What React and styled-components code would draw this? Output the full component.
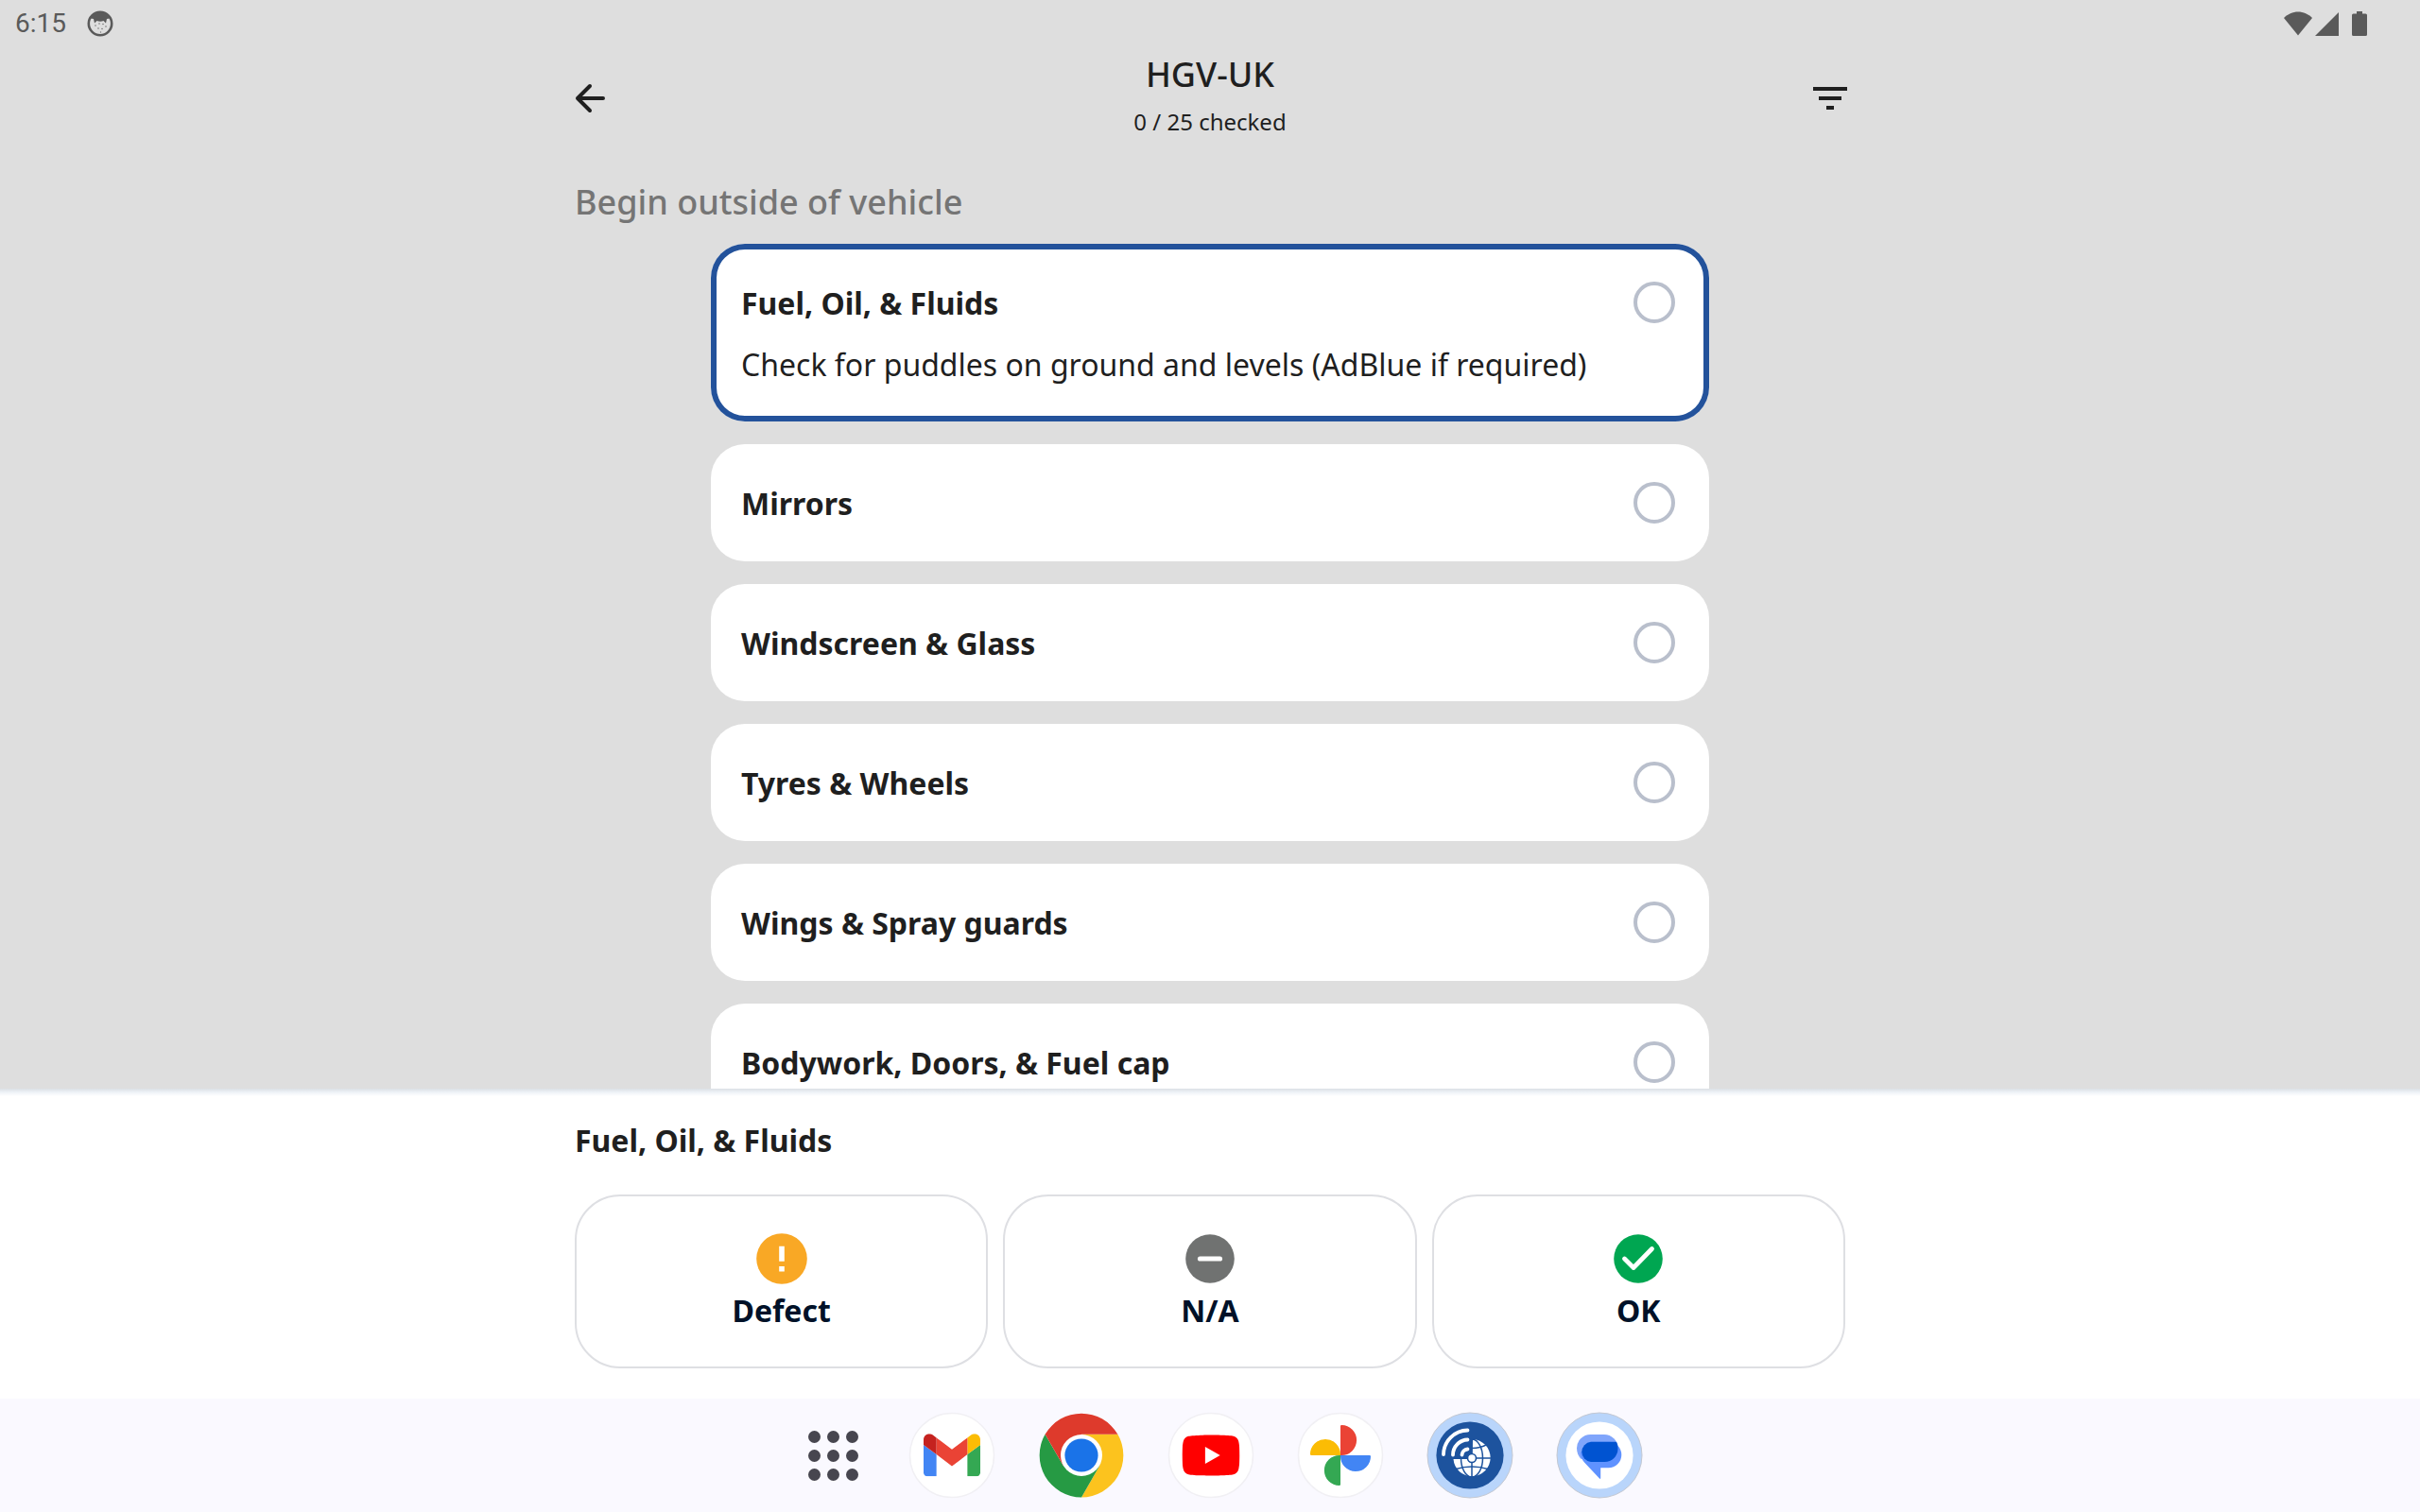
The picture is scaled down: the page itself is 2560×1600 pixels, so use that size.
import React, { useState } from "react";
import styled, { createGlobalStyle } from "styled-components";

const GlobalStyle = createGlobalStyle`
  * { box-sizing: border-box; }
  html, body { margin: 0; padding: 0; }
  body {
    background: #dedede;
    color: #1f1f1f;
    font-family: "Noto Sans", "Open Sans", sans-serif;
  }
  button, input { font: inherit; }
`;

const Screen = styled.div`
  display: flex;
  flex-direction: column;
  height: 100vh;
  overflow: hidden;
`;

const StatusBar = styled.div`
  flex: none;
  display: flex;
  align-items: center;
  justify-content: space-between;
  height: 48px;
  padding: 2px 56px 0 16px;
  color: #5a5a5a;
`;

const StatusGroup = styled.div`
  display: flex;
  align-items: center;
  gap: ${(p) => p.$gap}px;
`;

const Clock = styled.time`
  font-family: Roboto, sans-serif;
  font-size: 28px;
  line-height: 46px;
`;

const Header = styled.header`
  flex: none;
  display: flex;
  align-items: center;
  justify-content: space-between;
  width: 100%;
  max-width: 1360px;
  height: 112px;
  margin: 0 auto;
`;

const IconButton = styled.button`
  display: flex;
  align-items: center;
  justify-content: center;
  width: 48px;
  height: 48px;
  padding: 0;
  border: 0;
  background: none;
  color: #1f1f1f;
`;

const Heading = styled.div`
  display: flex;
  flex-direction: column;
  align-items: center;
  gap: 8px;
  padding-bottom: 6px;
`;

const Title = styled.h1`
  margin: 0;
  font-size: 36px;
  font-weight: 500;
  line-height: 48px;
`;

const Progress = styled.p`
  margin: 0;
  font-size: 24px;
  line-height: 36px;
`;

const ListArea = styled.main`
  flex: 1;
  min-height: 0;
  width: 100%;
  max-width: 1344px;
  margin: 0 auto;
  padding-top: 30px;
  overflow: hidden;
`;

const SectionTitle = styled.h2`
  margin: 0 0 20px;
  color: #757575;
  font-size: 36px;
  font-weight: 500;
  line-height: 48px;
`;

const CheckList = styled.ul`
  display: flex;
  flex-direction: column;
  gap: 24px;
  margin: 0;
  padding: 0 144px;
  list-style: none;
`;

const CheckCard = styled.label`
  display: flex;
  flex-direction: column;
  gap: 20px;
  padding: 40px 36px 38px 32px;
  border-radius: 36px;
  background: #fff;
  box-shadow: ${(p) => (p.$active ? "inset 0 0 0 6px #23529b" : "none")};
`;

const CheckRow = styled.span`
  display: flex;
  align-items: flex-start;
  justify-content: space-between;
`;

const ItemTitle = styled.span`
  font-size: 32px;
  font-weight: 700;
  line-height: 46px;
`;

const ItemText = styled.span`
  font-size: 32px;
  line-height: 44px;
`;

const Tick = styled.input`
  appearance: none;
  width: 44px;
  height: 44px;
  margin: 0;
  border: 4px solid #b9bfcc;
  border-radius: 50%;
  background: #fff;
`;

const Sheet = styled.section`
  flex: none;
  padding: 32px 0;
  background: linear-gradient(#dbe0e5, #eff3f8 4px, #fff 8px);
`;

const SheetBody = styled.div`
  display: flex;
  flex-direction: column;
  gap: 34px;
  width: 100%;
  max-width: 1344px;
  margin: 0 auto;
`;

const SheetTitle = styled.h2`
  margin: 0;
  font-size: 32px;
  font-weight: 700;
  line-height: 46px;
`;

const Actions = styled.div`
  display: grid;
  grid-template-columns: repeat(3, 1fr);
  gap: 16px;
`;

const ActionButton = styled.button`
  display: flex;
  flex-direction: column;
  align-items: center;
  gap: 4px;
  padding: 38px 16px 36px;
  border: 2px solid #dedfe3;
  border-radius: 48px;
  background: #fff;
  color: #001128;
  font-size: 32px;
  font-weight: 700;
  line-height: 46px;
`;

const Dock = styled.nav`
  flex: none;
  display: flex;
  align-items: center;
  justify-content: center;
  gap: 45px;
  height: 120px;
  padding-left: 24px;
  background: #faf9ff;
`;

const DockButton = styled.button`
  display: flex;
  align-items: center;
  justify-content: center;
  width: ${(p) => p.$width || 92}px;
  height: 92px;
  padding: 0;
  border: 0;
  background: none;
`;

const ITEMS = [
  { name: "Fuel, Oil, & Fluids", text: "Check for puddles on ground and levels (AdBlue if required)" },
  { name: "Mirrors" },
  { name: "Windscreen & Glass" },
  { name: "Tyres & Wheels" },
  { name: "Wings & Spray guards" },
  { name: "Bodywork, Doors, & Fuel cap" },
];

function FaceIcon() {
  return (
    <svg width="28" height="28" viewBox="0 0 28 28" aria-hidden="true">
      <circle cx="14" cy="14" r="12.2" fill="none" stroke="#5a5a5a" strokeWidth="2.6" />
      <path d="M4 8.500C6 4 10 2 14 2s8 2 10 6.500l-3 .500-1 4.500-2.500-2.500c-2 1-5 1-7 0l-2.500 2.500-1-4.500z" fill="#5a5a5a" />
      <g fill="#777">
        <circle cx="9" cy="16" r="0.8" /><circle cx="13" cy="14" r="0.8" />
        <circle cx="17" cy="14.500" r="0.8" /><circle cx="20" cy="17" r="0.8" />
        <circle cx="12" cy="19" r="0.8" /><circle cx="16" cy="19.500" r="0.8" />
        <circle cx="14.500" cy="23" r="0.7" />
      </g>
    </svg>
  );
}

function WifiIcon() {
  return (
    <svg width="30" height="26" viewBox="0 0 30 26" aria-hidden="true">
      <path d="M15 25.500 0 7C4 3 9.500.500 15 .500S26 3 30 7z" fill="#5a5a5a" />
    </svg>
  );
}

function SignalIcon() {
  return (
    <svg width="25" height="26" viewBox="0 0 25 26" aria-hidden="true">
      <path d="M25 1v25H0z" fill="#5a5a5a" />
    </svg>
  );
}

function BatteryIcon() {
  return (
    <svg width="16" height="26" viewBox="0 0 16 26" aria-hidden="true">
      <path d="M5 0h6v2.500h3.500A1.500 1.500 0 0 1 16 4v20.500a1.500 1.500 0 0 1-1.500 1.500h-13A1.500 1.500 0 0 1 0 24.500V4a1.500 1.500 0 0 1 1.500-1.500H5z" fill="#5a5a5a" />
    </svg>
  );
}

function BackIcon() {
  return (
    <svg width="48" height="48" viewBox="0 0 48 48" fill="none" stroke="currentColor" strokeWidth="4" strokeLinecap="round" strokeLinejoin="round" aria-hidden="true">
      <path d="M38 24H11M24 11 11 24l13 13" />
    </svg>
  );
}

function FilterIcon() {
  return (
    <svg width="48" height="48" viewBox="0 0 24 24" fill="currentColor" aria-hidden="true">
      <path d="M3 6h18v2H3zM6 11h12v2H6zM10 16h4v2h-4z" />
    </svg>
  );
}

function DefectIcon() {
  return (
    <svg width="56" height="56" viewBox="0 0 56 56" aria-hidden="true">
      <circle cx="28" cy="28" r="26.800" fill="#f9a825" />
      <path d="M25.200 14.700h5.600v16h-5.600zM25.200 36h5.600v5.600h-5.600z" fill="#fff" />
    </svg>
  );
}

function NotApplicableIcon() {
  return (
    <svg width="56" height="56" viewBox="0 0 56 56" aria-hidden="true">
      <circle cx="28" cy="28" r="25.800" fill="#707271" />
      <path d="M17.500 28h21" stroke="#fff" strokeWidth="5.200" strokeLinecap="round" />
    </svg>
  );
}

function OkIcon() {
  return (
    <svg width="56" height="56" viewBox="0 0 56 56" aria-hidden="true">
      <circle cx="28" cy="28" r="25.800" fill="#00a651" />
      <path d="M13.500 28 23 37.500 42.500 17.500" fill="none" stroke="#fff" strokeWidth="4.800" strokeLinecap="round" strokeLinejoin="round" />
    </svg>
  );
}

function AppsIcon() {
  const steps = [0, 20, 40];
  return (
    <svg width="53" height="53" viewBox="0 0 53 53" fill="#47464f" aria-hidden="true">
      {steps.map((y) => steps.map((x) => <circle key={`${x}-${y}`} cx={x + 6.5} cy={y + 6.5} r="6.500" />))}
    </svg>
  );
}

function Disc() {
  return <circle cx="46" cy="46" r="44.500" fill="#fff" stroke="#f1f0f4" strokeWidth="1.500" />;
}

function Halo() {
  return <circle cx="46" cy="46" r="45" fill="#b9d5fb" stroke="#c3c8d2" strokeWidth="1" />;
}

function GmailIcon() {
  return (
    <svg width="92" height="92" viewBox="0 0 92 92" aria-hidden="true">
      <Disc />
      <svg x="16" y="23.300" width="60" height="45" viewBox="52 42 88 66">
        <path fill="#4285f4" d="M58 108h14V74L52 59v43c0 3.320 2.690 6 6 6" />
        <path fill="#34a853" d="M120 108h14c3.320 0 6-2.690 6-6V59l-20 15" />
        <path fill="#fbbc04" d="M120 48v26l20-15v-8c0-7.420-8.470-11.650-14.400-7.200" />
        <path fill="#ea4335" d="M72 74V48l24 18 24-18v26L96 92" />
        <path fill="#c5221f" d="M52 51v8l20 15V48l-5.600-4.200c-5.940-4.450-14.400-.220-14.400 7.200" />
      </svg>
    </svg>
  );
}

function ChromeIcon() {
  return (
    <svg width="92" height="92" viewBox="-46 -46 92 92" aria-hidden="true">
      <path fill="#fcc31e" d="M0-22.200H38.400A44.400 44.400 0 0 1 0 44.400L19.200 11.100z" />
      <path fill="#269a44" d="M19.200 11.100 0 44.400A44.400 44.400 0 0 1-38.400-22.200L-19.200 11.100z" />
      <path fill="#de3a2c" d="M-19.200 11.100-38.400-22.200A44.400 44.400 0 0 1 38.400-22.200H0z" />
      <circle r="22" fill="#fff" />
      <circle r="17.600" fill="#1a73e8" />
    </svg>
  );
}

function YouTubeIcon() {
  return (
    <svg width="92" height="92" viewBox="0 0 92 92" aria-hidden="true">
      <Disc />
      <svg x="15.500" y="15.500" width="61" height="61" viewBox="0 0 24 24">
        <path fill="#f00" d="M23.498 6.186a3.016 3.016 0 0 0-2.122-2.136C19.505 3.545 12 3.545 12 3.545s-7.505 0-9.377.505A3.017 3.017 0 0 0 .502 6.186C0 8.070 0 12 0 12s0 3.930.502 5.814a3.016 3.016 0 0 0 2.122 2.136c1.871.505 9.376.505 9.376.505s7.505 0 9.377-.505a3.015 3.015 0 0 0 2.122-2.136C24 15.930 24 12 24 12s0-3.930-.502-5.814z" />
        <path fill="#fff" d="M9.600 15.570V8.430L15.820 12z" />
      </svg>
    </svg>
  );
}

function PhotosIcon() {
  return (
    <svg width="92" height="92" viewBox="0 0 92 92" aria-hidden="true">
      <Disc />
      <path fill="#ea4335" d="M46 46V15.200q0-1.200 1.200-1.200A16 16 0 0 1 47 46z" />
      <path fill="#4285f4" d="M46 46H76.800q1.200 0 1.200 1.200A16 16 0 0 1 46 47z" />
      <path fill="#34a853" d="M46 46V76.800q0 1.200-1.200 1.200A16 16 0 0 1 45 46z" />
      <path fill="#fbbc04" d="M46 46H15.200q-1.200 0-1.200-1.200A16 16 0 0 1 46 45z" />
    </svg>
  );
}

function TrackerIcon() {
  return (
    <svg width="92" height="92" viewBox="0 0 92 92" aria-hidden="true">
      <Halo />
      <circle cx="46" cy="46" r="35.600" fill="#1d539e" />
      <path fill="#fff" d="M49 29A19.600 19.600 0 1 1 28.500 50H48z" />
      <g fill="none" stroke="#1d539e" strokeWidth="1.500">
        <path d="M48 28v41M28 49h40" />
        <ellipse cx="48" cy="49" rx="11.500" ry="20" />
        <path d="M48 38.500q9 0 16-4M31 60.500q17-5 34 0" />
      </g>
      <path d="M28 48V29h20v19z" fill="#1d539e" />
      <circle cx="48" cy="49" r="4.500" fill="#fff" stroke="#1d539e" strokeWidth="1.600" />
      <g fill="none" stroke="#fff" strokeWidth="3.800" strokeLinecap="round">
        <path d="M18 45A26 26 0 0 1 43.500 19.500" />
        <path d="M28 45.500A16 16 0 0 1 43.500 29.500" />
        <path d="M37.500 45.500A6.500 6.500 0 0 1 43.500 39.500" />
      </g>
    </svg>
  );
}

function MessagesIcon() {
  return (
    <svg width="92" height="92" viewBox="0 0 92 92" aria-hidden="true">
      <Halo />
      <circle cx="46" cy="46" r="35.600" fill="#fff" />
      <path fill="#80a5fb" d="M36.500 24H51a14.500 14.500 0 0 1 14.500 14.500V53H40L26 49.500C23.500 46.500 22 42.500 22 38.500A14.500 14.500 0 0 1 36.500 24z" />
      <path fill="#5f92ff" d="M36.500 31.700H55.500a13.800 13.800 0 0 1 0 27.600H47.200V70q0 1.500-1.200.500L30 53.500C27.500 50.500 26 47 26 43z" />
      <path fill="#0053d1" d="M37 31.700H64Q65.500 34 65.500 39A14 14 0 0 1 51.500 53H37A10.700 10.700 0 0 1 37 31.700z" />
    </svg>
  );
}

const ACTIONS = [
  { label: "Defect", Icon: DefectIcon },
  { label: "N/A", Icon: NotApplicableIcon },
  { label: "OK", Icon: OkIcon },
];

const APPS = [
  { label: "Gmail", Icon: GmailIcon },
  { label: "Chrome", Icon: ChromeIcon },
  { label: "YouTube", Icon: YouTubeIcon },
  { label: "Photos", Icon: PhotosIcon },
  { label: "Vehicle checks", Icon: TrackerIcon },
  { label: "Messages", Icon: MessagesIcon },
];

export default function App() {
  const [active] = useState(0);

  return (
    <Screen>
      <GlobalStyle />
      <StatusBar>
        <StatusGroup $gap={22}>
          <Clock>6:15</Clock>
          <FaceIcon />
        </StatusGroup>
        <StatusGroup $gap={14}>
          <StatusGroup $gap={3}>
            <WifiIcon />
            <SignalIcon />
          </StatusGroup>
          <BatteryIcon />
        </StatusGroup>
      </StatusBar>

      <Header>
        <IconButton type="button" aria-label="Back"><BackIcon /></IconButton>
        <Heading>
          <Title>HGV-UK</Title>
          <Progress>0 / 25 checked</Progress>
        </Heading>
        <IconButton type="button" aria-label="Filter"><FilterIcon /></IconButton>
      </Header>

      <ListArea>
        <SectionTitle>Begin outside of vehicle</SectionTitle>
        <CheckList>
          {ITEMS.map((item, i) => (
            <li key={item.name}>
              <CheckCard $active={i === active} htmlFor={`check-${i}`}>
                <CheckRow>
                  <ItemTitle>{item.name}</ItemTitle>
                  <Tick type="checkbox" id={`check-${i}`} />
                </CheckRow>
                {item.text && <ItemText>{item.text}</ItemText>}
              </CheckCard>
            </li>
          ))}
        </CheckList>
      </ListArea>

      <Sheet>
        <SheetBody>
          <SheetTitle>{ITEMS[active].name}</SheetTitle>
          <Actions>
            {ACTIONS.map(({ label, Icon }) => (
              <ActionButton key={label} type="button">
                <Icon />
                {label}
              </ActionButton>
            ))}
          </Actions>
        </SheetBody>
      </Sheet>

      <Dock aria-label="Apps">
        <DockButton type="button" aria-label="All apps" $width={69}><AppsIcon /></DockButton>
        {APPS.map(({ label, Icon }) => (
          <DockButton key={label} type="button" aria-label={label}><Icon /></DockButton>
        ))}
      </Dock>
    </Screen>
  );
}
